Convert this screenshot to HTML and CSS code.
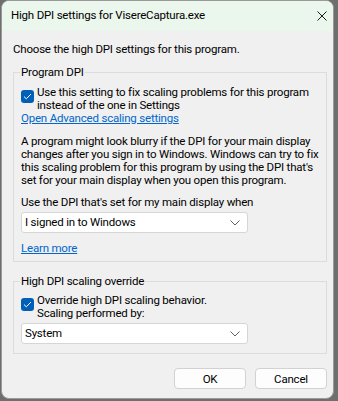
FILE: index.html
```html
<!DOCTYPE html>
<html lang="en">
<head>
    <meta charset="UTF-8">
    <meta name="viewport" content="width=device-width, initial-scale=1.0">
    <title>High DPI settings</title>
    <link rel="stylesheet" href="styles.css">
</head>
<body>
    <div class="window">
        <div class="titlebar">
            <span class="title">High DPI settings for VisereCaptura.exe</span>
            <svg class="close" width="10" height="10" viewBox="0 0 10 10">
                <path d="M0.5 0.5 L9.5 9.5 M9.5 0.5 L0.5 9.5" stroke="#1a1a1a" stroke-width="1" fill="none"/>
            </svg>
        </div>

        <div class="content">
            <p class="intro">Choose the high DPI settings for this program.</p>

            <fieldset class="group group-program">
                <legend>Program DPI</legend>
                <div class="check-row">
                    <span class="checkbox">
                        <svg width="9" height="7" viewBox="0 0 9 7">
                            <path d="M1 3.6 L3.3 5.8 L8 1" stroke="#fff" stroke-width="1" fill="none"/>
                        </svg>
                    </span>
                    <span class="check-label">Use this setting to fix scaling problems for this program<br>instead of the one in Settings</span>
                </div>
                <a class="link link-advanced" href="#">Open Advanced scaling settings</a>
                <p class="desc">A program might look blurry if the DPI for your main display<br>changes after you sign in to Windows. Windows can try to fix<br>this scaling problem for this program by using the DPI that's<br>set for your main display when you open this program.</p>
                <p class="select-label">Use the DPI that's set for my main display when</p>
                <div class="select">
                    <span>I signed in to Windows</span>
                    <svg class="chevron" width="10" height="6" viewBox="0 0 10 6">
                        <path d="M0.5 0.5 L5 5 L9.5 0.5" stroke="#5f5f5f" stroke-width="1" fill="none"/>
                    </svg>
                </div>
                <a class="link link-learn" href="#">Learn more</a>
            </fieldset>

            <fieldset class="group group-override">
                <legend>High DPI scaling override</legend>
                <div class="check-row">
                    <span class="checkbox">
                        <svg width="9" height="7" viewBox="0 0 9 7">
                            <path d="M1 3.6 L3.3 5.8 L8 1" stroke="#fff" stroke-width="1" fill="none"/>
                        </svg>
                    </span>
                    <span class="check-label">Override high DPI scaling behavior.<br>Scaling performed by:</span>
                </div>
                <div class="select select-system">
                    <span>System</span>
                    <svg class="chevron" width="10" height="6" viewBox="0 0 10 6">
                        <path d="M0.5 0.5 L5 5 L9.5 0.5" stroke="#5f5f5f" stroke-width="1" fill="none"/>
                    </svg>
                </div>
            </fieldset>

            <div class="buttons">
                <button class="btn">OK</button>
                <button class="btn">Cancel</button>
            </div>
        </div>
    </div>
</body>
</html>
```

FILE: styles.css
```css
* {
    margin: 0;
    padding: 0;
    box-sizing: border-box;
}

body {
    background: #6e6e6e;
    font-family: Roboto, "Noto Sans", sans-serif;
    font-size: 11.5px;
    letter-spacing: -0.2px;
    line-height: 13px;
    color: #000;
}

.window {
    width: 333px;
    height: 399px;
    margin-left: 1px;
    background: #f0f0f0;
    border: 1px solid #9a9a9a;
    border-radius: 8px;
    overflow: hidden;
}

.titlebar {
    height: 30px;
    background: #ebf6ec;
    display: flex;
    align-items: center;
    justify-content: space-between;
    padding: 0 6px 1px 9px;
}

.content {
    padding: 12px 6px 0 11px;
    white-space: nowrap;
}

.intro {
    margin-bottom: 10px;
}

.group {
    border: 1px solid #dcdcdc;
    padding: 0 7px 0 7px;
}

.group legend {
    padding: 0 1px;
    margin-left: -1px;
}

.check-row {
    display: flex;
    align-items: flex-start;
    margin-top: 7px;
}

.checkbox {
    width: 13px;
    height: 13px;
    margin-top: 4px;
    margin-right: 3px;
    border-radius: 3px;
    background: #005fb8;
    display: flex;
    align-items: center;
    justify-content: center;
    flex-shrink: 0;
}

.link {
    display: block;
    color: #0066cc;
    text-decoration: underline;
    width: max-content;
}

.desc {
    margin-top: 10px;
}

.select-label {
    margin-top: 9px;
}

.select {
    width: 227px;
    height: 21px;
    margin-top: 3px;
    background: #fff;
    border: 1px solid #d6d6d6;
    border-radius: 3px;
    display: flex;
    align-items: center;
    justify-content: space-between;
    padding: 0 7px 0 3px;
}

.link-learn {
    margin-top: 9px;
    margin-bottom: 6px;
}

.group-override {
    margin-top: 13px;
}

.group-override .check-row {
    margin-top: 6px;
}

.select-system {
    margin-top: 3px;
    margin-bottom: 9px;
}

.buttons {
    display: flex;
    justify-content: flex-end;
    gap: 9px;
    margin-top: 14px;
}

.btn {
    width: 72px;
    height: 21px;
    background: #fdfdfd;
    border: 1px solid #d2d2d2;
    border-radius: 4px;
    font-family: inherit;
    font-size: inherit;
    letter-spacing: inherit;
    color: #000;
}
```
